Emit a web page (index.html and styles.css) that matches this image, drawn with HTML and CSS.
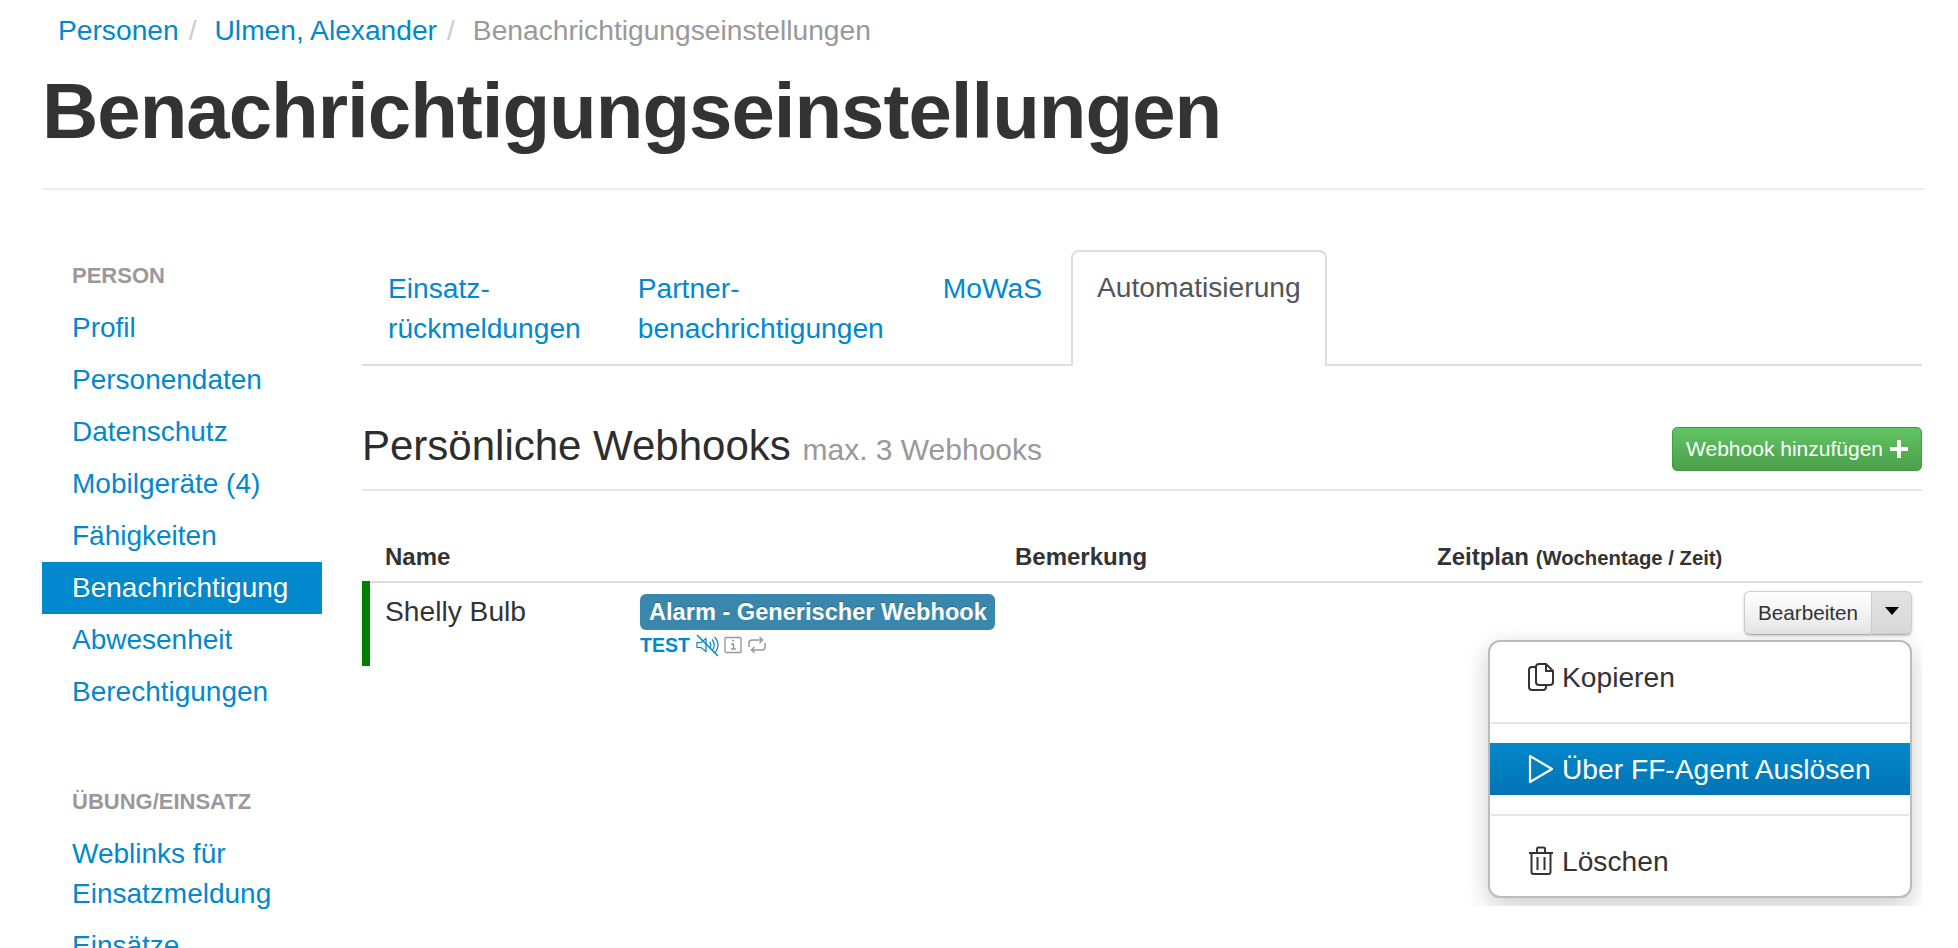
FILE: index.html
```html
<!DOCTYPE html>
<html lang="de">
<head>
    <meta charset="UTF-8">
    <title>Benachrichtigungseinstellungen</title>
    <link rel="stylesheet" href="styles.css">
</head>
<body>
    <div class="page">
        <ul class="breadcrumb">
            <li><a href="#">Personen</a><span class="divider">/</span></li>
            <li><a href="#">Ulmen, Alexander</a><span class="divider">/</span></li>
            <li class="current">Benachrichtigungseinstellungen</li>
        </ul>
        <h1 class="page-title">Benachrichtigungseinstellungen</h1>

        <div class="layout">
            <nav class="sidebar">
                <div class="nav-header">Person</div>
                <a href="#">Profil</a>
                <a href="#">Personendaten</a>
                <a href="#">Datenschutz</a>
                <a href="#">Mobilgeräte (4)</a>
                <a href="#">Fähigkeiten</a>
                <a href="#" class="active">Benachrichtigung</a>
                <a href="#">Abwesenheit</a>
                <a href="#">Berechtigungen</a>
                <div class="nav-header second">Übung/Einsatz</div>
                <a href="#">Weblinks für Einsatzmeldung</a>
                <a href="#">Einsätze</a>
            </nav>

            <main class="content">
                <ul class="tabs">
                    <li><a href="#">Einsatz-<br>rückmeldungen</a></li>
                    <li><a href="#">Partner-<br>benachrichtigungen</a></li>
                    <li><a href="#">MoWaS</a></li>
                    <li class="active"><a href="#">Automatisierung</a></li>
                </ul>

                <div class="section-head">
                    <h2>Persönliche Webhooks <small>max. 3 Webhooks</small></h2>
                    <a href="#" class="btn-green">Webhook hinzufügen
                        <svg viewBox="0 0 18 18" width="18" height="18"><path d="M9 0v18M0 9h18" stroke="#fff" stroke-width="4"/></svg>
                    </a>
                </div>

                <div class="table-head">
                    <div class="col-name">Name</div>
                    <div class="col-note">Bemerkung</div>
                    <div class="col-plan">Zeitplan <small>(Wochentage / Zeit)</small></div>
                </div>

                <div class="row">
                    <div class="row-name">Shelly Bulb</div>
                    <div class="row-type">
                        <span class="badge">Alarm - Generischer Webhook</span>
                        <div class="row-flags">
                            <b>TEST</b>
                            <svg viewBox="0 0 24 24" width="24" height="24" fill="none" stroke="#0288cc" stroke-width="1.2">
                                <path d="M2 9.5h4l5-4v13l-5-4H2z"/>
                                <path d="M14.5 9a4 4 0 0 1 0 6M17 6.5a8 8 0 0 1 0 11M19.5 4a11 11 0 0 1 0 16"/>
                                <path d="M2 2l21 21" stroke-width="1.6"/>
                            </svg>
                            <svg viewBox="0 0 18 18" width="18" height="18" fill="none" stroke="#999" stroke-width="1.4">
                                <rect x="1" y="1.5" width="16" height="15" rx="1"/>
                                <path d="M8 4.5h2M7 8h2.5v5M7 13h5" stroke-width="1.5"/>
                            </svg>
                            <svg viewBox="0 0 20 18" width="20" height="18" fill="none" stroke="#999" stroke-width="1.5">
                                <path d="M2 11V7a3 3 0 0 1 3-3h10M12.5 1l3 3-3 3"/>
                                <path d="M18 7v4a3 3 0 0 1-3 3H5M7.5 11l-3 3 3 3"/>
                            </svg>
                        </div>
                    </div>
                    <div class="btn-group">
                        <a href="#" class="btn">Bearbeiten</a>
                        <a href="#" class="btn btn-caret"><span class="caret"></span></a>
                    </div>
                    <div class="menu-clip">
                        <ul class="menu">
                            <li>
                                <a href="#">
                                    <svg viewBox="0 0 26 30" width="26" height="30" fill="none" stroke="#333" stroke-width="2">
                                        <path d="M8 5H4a3 3 0 0 0-3 3v17a3 3 0 0 0 3 3h11a3 3 0 0 0 3-3v-2"/>
                                        <path d="M8 5a3 3 0 0 1 3-3h7l7 7v11a3 3 0 0 1-3 3H11a3 3 0 0 1-3-3zM18 2v7h7"/>
                                    </svg>
                                    Kopieren
                                </a>
                            </li>
                            <li class="divider-line"></li>
                            <li class="selected">
                                <a href="#">
                                    <svg viewBox="0 0 26 30" width="26" height="30" fill="none" stroke="#fff" stroke-width="2.2" stroke-linejoin="round">
                                        <path d="M2 2l22 13L2 28z"/>
                                    </svg>
                                    Über FF-Agent Auslösen
                                </a>
                            </li>
                            <li class="divider-line"></li>
                            <li>
                                <a href="#">
                                    <svg viewBox="0 0 26 30" width="26" height="30" fill="none" stroke="#333" stroke-width="2">
                                        <path d="M1 7h24M9 7V3a1.5 1.5 0 0 1 1.5-1.5h5A1.5 1.5 0 0 1 17 3v4"/>
                                        <path d="M3.5 7v19a2 2 0 0 0 2 2h15a2 2 0 0 0 2-2V7M9.5 11v13M16.5 11v13"/>
                                    </svg>
                                    Löschen
                                </a>
                            </li>
                        </ul>
                    </div>
                </div>
            </main>
        </div>
    </div>
</body>
</html>
```

FILE: styles.css
```css
html, body {
    height: 100%;
    overflow: hidden;
}
body {
    margin: 0;
    font-family: "Liberation Sans", Arial, sans-serif;
    font-size: 28.2px;
    line-height: 40px;
    color: #333;
    background-color: #fff;
}
a {
    color: #0288cc;
    text-decoration: none;
}
.page {
    width: 1883px;
    margin-left: 42px;
}

/* breadcrumb */
.breadcrumb {
    display: flex;
    list-style: none;
    margin: 0;
    padding: 10px 0 0 16px;
}
.breadcrumb .divider {
    color: #ccc;
    padding: 0 18px 0 10px;
}
.breadcrumb .current {
    color: #999;
}
.page-title {
    margin: 16px 0 0;
    padding-bottom: 32px;
    font-size: 78px;
    line-height: 90px;
    letter-spacing: -1px;
    font-weight: bold;
    border-bottom: 2px solid #eee;
}

/* layout */
.layout {
    display: grid;
    grid-template-columns: 280px 1560px;
    column-gap: 40px;
    margin-top: 60px;
}

/* sidebar */
.sidebar {
    display: flex;
    flex-direction: column;
    font-size: 28px;
}
.sidebar a {
    padding: 5.5px 30px 6.5px;
}
.sidebar a.active {
    color: #fff;
    background-color: #0288cc;
    text-shadow: 0 -1px 0 rgba(0,0,0,0.2);
}
.nav-header {
    padding: 6px 30px;
    font-size: 22px;
    font-weight: bold;
    color: #999;
    text-transform: uppercase;
}
.nav-header.second {
    margin-top: 58px;
}

/* tabs */
.tabs {
    display: flex;
    list-style: none;
    margin: 0;
    padding: 0;
    height: 114px;
    border-bottom: 2px solid #ddd;
}
.tabs li {
    margin-right: 4px;
}
.tabs a {
    display: block;
    padding: 18px 27px 0 26px;
}
.tabs li:nth-child(2) a {
    padding-right: 28px;
}
.tabs li:nth-child(3) a {
    padding-left: 27px;
    padding-right: 25px;
}
.tabs li.active {
    height: 114px;
    background-color: #fff;
    border: 2px solid #ddd;
    border-bottom: 0;
    border-radius: 8px 8px 0 0;
}
.tabs li.active a {
    color: #555;
    padding: 15px 24px 0;
}

/* section head */
.section-head {
    display: flex;
    justify-content: space-between;
    align-items: flex-end;
    height: 105px;
    padding-bottom: 18px;
    border-bottom: 2px solid #e5e5e5;
}
.section-head h2 {
    margin: 0 0 1px;
    font-size: 42px;
    font-weight: normal;
    color: #2d2d2d;
}
.section-head small {
    font-size: 30px;
    color: #999;
}
.btn-green {
    display: flex;
    align-items: center;
    gap: 7px;
    height: 44px;
    padding: 0 13px;
    box-sizing: border-box;
    font-size: 21px;
    color: #fff;
    background: linear-gradient(#62c462, #4aa04a);
    border: 1px solid #429a42;
    border-radius: 5px;
}

/* table */
.table-head {
    display: flex;
    height: 92px;
    margin-bottom: -2px;
    padding-top: 46px;
    box-sizing: border-box;
    font-size: 24px;
    font-weight: bold;
    border-bottom: 2px solid #ddd;
}
.col-name {
    width: 653px;
    padding-left: 23px;
    box-sizing: border-box;
}
.col-note {
    width: 422px;
}
.col-plan small {
    font-size: 20.3px;
}
.row {
    position: relative;
    display: flex;
    height: 85px;
    border-left: 8px solid #008000;
}
.row-name {
    width: 270px;
    padding: 10px 0 0 15px;
    box-sizing: border-box;
}
.badge {
    display: block;
    width: 355px;
    height: 36px;
    margin-top: 13px;
    box-sizing: border-box;
    padding-left: 9px;
    font-size: 23.6px;
    font-weight: bold;
    line-height: 36px;
    color: #fff;
    background-color: #3a87ad;
    border-radius: 6px;
    text-shadow: 0 -1px 0 rgba(0,0,0,0.25);
    white-space: nowrap;
}
.row-flags {
    display: flex;
    align-items: center;
    gap: 5px;
    height: 30px;
}
.row-flags b {
    font-size: 19.5px;
    color: #0288cc;
}

/* split button */
.btn-group {
    position: absolute;
    top: 10px;
    right: 10px;
    display: flex;
    height: 44px;
    border-radius: 6px;
    box-shadow: 0 1px 3px rgba(0,0,0,0.2);
}
.btn {
    display: block;
    width: 128px;
    box-sizing: border-box;
    text-align: center;
    font-size: 20.7px;
    line-height: 42px;
    color: #333;
    background: linear-gradient(#fff, #e6e6e6);
    border: 1px solid #ccc;
    border-bottom-color: #b3b3b3;
    border-radius: 6px 0 0 6px;
}
.btn-caret {
    width: 40px;
    display: flex;
    align-items: center;
    justify-content: center;
    border-left: 0;
    background: linear-gradient(#e2e2e2, #d8d8d8);
    border-radius: 0 6px 6px 0;
}
.caret {
    border-top: 8px solid #000;
    border-left: 7px solid transparent;
    border-right: 7px solid transparent;
    margin-bottom: 4px;
}

/* dropdown menu, the screenshot cuts its shadow off on the right and below */
.menu-clip {
    position: absolute;
    top: 35px;
    left: 1078px;
    width: 474px;
    height: 290px;
    padding: 24px 0 0 40px;
    box-sizing: border-box;
    overflow: hidden;
}
.menu {
    width: 424px;
    height: 258px;
    margin: 0;
    padding: 9px 0 0;
    list-style: none;
    box-sizing: border-box;
    background-color: #fff;
    border: 2px solid #bbb;
    border-radius: 12px;
    box-shadow: 0 8px 24px rgba(0,0,0,0.2);
}
.menu li a {
    display: flex;
    align-items: center;
    gap: 8px;
    height: 52px;
    padding-left: 38px;
    color: #333;
}
.menu .divider-line {
    height: 2px;
    margin: 19px 1px;
    background-color: #e5e5e5;
}
.menu .selected a {
    color: #fff;
    background: linear-gradient(#0288cc, #0274b3);
}
```
